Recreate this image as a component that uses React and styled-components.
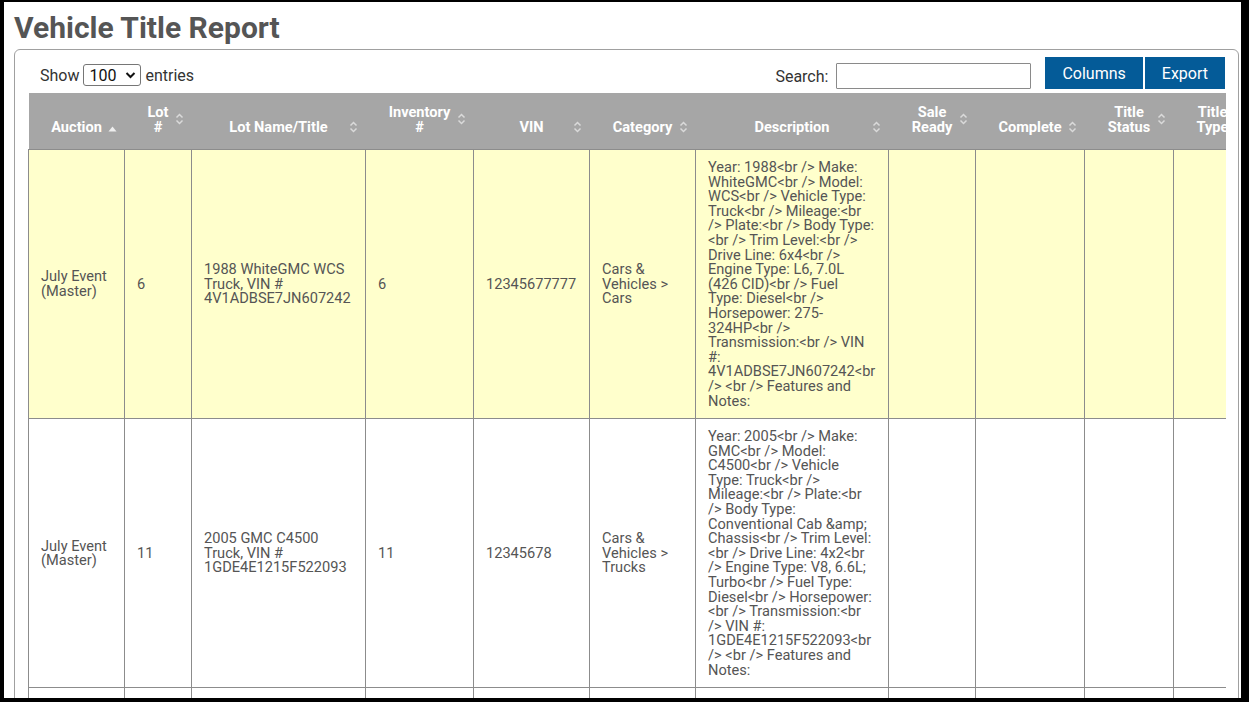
import React from "react";
import styled, { createGlobalStyle } from "styled-components";

const GlobalStyle = createGlobalStyle`
  html, body {
    margin: 0;
    padding: 0;
    background: #000;
    font-family: Roboto, "Liberation Sans", Arial, sans-serif;
  }
`;

const columns = [
  { key: "auction", label: ["Auction"], width: 96, sorted: true },
  { key: "lot", label: ["Lot", "#"], width: 67 },
  { key: "title", label: ["Lot Name/Title"], width: 174 },
  { key: "inventory", label: ["Inventory", "#"], width: 108 },
  { key: "vin", label: ["VIN"], width: 116 },
  { key: "category", label: ["Category"], width: 106 },
  { key: "description", label: ["Description"], width: 193 },
  { key: "saleReady", label: ["Sale", "Ready"], width: 87 },
  { key: "complete", label: ["Complete"], width: 109 },
  { key: "titleStatus", label: ["Title", "Status"], width: 89 },
  { key: "titleType", label: ["Title", "Type"], width: 78 },
  { key: "received", label: ["Received"], width: 100 },
];

const rows = [
  {
    auction: "July Event (Master)",
    lot: "6",
    title: "1988 WhiteGMC WCS Truck, VIN # 4V1ADBSE7JN607242",
    inventory: "6",
    vin: "12345677777",
    category: "Cars & Vehicles > Cars",
    description:
      "Year: 1988<br /> Make: WhiteGMC<br /> Model: WCS<br /> Vehicle Type: Truck<br /> Mileage:<br /> Plate:<br /> Body Type: <br /> Trim Level:<br /> Drive Line: 6x4<br /> Engine Type: L6, 7.0L (426 CID)<br /> Fuel Type: Diesel<br /> Horsepower: 275-324HP<br /> Transmission:<br /> VIN #: 4V1ADBSE7JN607242<br /> <br /> Features and Notes:",
    highlight: true,
  },
  {
    auction: "July Event (Master)",
    lot: "11",
    title: "2005 GMC C4500 Truck, VIN # 1GDE4E1215F522093",
    inventory: "11",
    vin: "12345678",
    category: "Cars & Vehicles > Trucks",
    description:
      "Year: 2005<br /> Make: GMC<br /> Model: C4500<br /> Vehicle Type: Truck<br /> Mileage:<br /> Plate:<br /> Body Type: Conventional Cab &amp; Chassis<br /> Trim Level: <br /> Drive Line: 4x2<br /> Engine Type: V8, 6.6L; Turbo<br /> Fuel Type: Diesel<br /> Horsepower: <br /> Transmission:<br /> VIN #: 1GDE4E1215F522093<br /> <br /> Features and Notes:",
  },
  {
    auction: "July Event (Master)",
    lot: "14",
    title: "2010 Ford F-350 Truck, VIN # 1FTWW3BR8AEA21774",
    inventory: "14",
    vin: "12345690",
    category: "Cars & Vehicles > Trucks",
    description: "Year: 2010<br /> Make: Ford<br /> Model: F-350",
  },
];

const SortIcon = ({ active }) =>
  active ? (
    <svg width="9" height="6" viewBox="0 0 9 6">
      <path d="M0.5 5.5 L4.5 0.5 L8.5 5.5 Z" fill="#eeeeee" />
    </svg>
  ) : (
    <svg width="9" height="14" viewBox="0 0 9 14">
      <path d="M1.5 5.5 L4.5 2.5 L7.5 5.5" fill="none" stroke="#dadada" strokeWidth="1.5" />
      <path d="M1.5 8.5 L4.5 11.5 L7.5 8.5" fill="none" stroke="#dadada" strokeWidth="1.5" />
    </svg>
  );

const ChevronDown = () => (
  <svg width="11" height="8" viewBox="0 0 11 8">
    <path d="M1.5 2 L5.5 6 L9.5 2" fill="none" stroke="#111" strokeWidth="2" />
  </svg>
);

export default function App() {
  return (
    <>
      <GlobalStyle />
      <Page>
        <Title>Vehicle Title Report</Title>
        <Panel>
          <Toolbar>
            <LengthControl>
              Show
              <SelectWrap>
                <Select defaultValue="100">
                  <option value="10">10</option>
                  <option value="25">25</option>
                  <option value="50">50</option>
                  <option value="100">100</option>
                </Select>
                <SelectArrow>
                  <ChevronDown />
                </SelectArrow>
              </SelectWrap>
              entries
            </LengthControl>
            <RightControls>
              <SearchLabel>
                Search:
                <SearchInput type="text" />
              </SearchLabel>
              <ButtonGroup>
                <ActionButton>Columns</ActionButton>
                <ActionButton>Export</ActionButton>
              </ButtonGroup>
            </RightControls>
          </Toolbar>

          <TableScroll>
            <Table>
              <colgroup>
                {columns.map((c) => (
                  <col key={c.key} style={{ width: c.width }} />
                ))}
              </colgroup>
              <thead>
                <tr>
                  {columns.map((c) => (
                    <HeadCell key={c.key}>
                      {c.label.map((line, i) => (
                        <HeadLine key={i}>{line}</HeadLine>
                      ))}
                      <SortMark $active={c.sorted} $twoLine={c.label.length > 1}>
                        <SortIcon active={c.sorted} />
                      </SortMark>
                    </HeadCell>
                  ))}
                </tr>
              </thead>
              <tbody>
                {rows.map((r, i) => (
                  <Row key={i} $highlight={r.highlight}>
                    {columns.map((c) => (
                      <Cell key={c.key}>{r[c.key] || ""}</Cell>
                    ))}
                  </Row>
                ))}
              </tbody>
            </Table>
          </TableScroll>
        </Panel>
      </Page>
    </>
  );
}

const Page = styled.div`
  margin: 2px 8px 4px 4px;
  height: 696px;
  overflow: hidden;
  background: #fff;
  padding: 0 2px 0 10px;
  box-sizing: border-box;
`;

const Title = styled.h1`
  margin: 0;
  padding: 8px 0 4px;
  font-size: 30px;
  line-height: 35px;
  font-weight: 700;
  color: #555;
`;

const Panel = styled.div`
  border: 1px solid #a0a0a0;
  border-radius: 6px;
  padding: 7px 12px 0 13px;
  height: 700px;
  box-sizing: border-box;
`;

const Toolbar = styled.div`
  display: flex;
  align-items: center;
  justify-content: space-between;
  height: 32px;
  margin-bottom: 4px;
`;

const LengthControl = styled.label`
  display: flex;
  align-items: center;
  gap: 4px;
  padding-left: 12px;
  padding-top: 4px;
  font-size: 16px;
  color: #333;
`;

const SelectWrap = styled.span`
  position: relative;
  display: inline-flex;
`;

const Select = styled.select`
  appearance: none;
  width: 58px;
  height: 22px;
  padding: 0 0 0 5px;
  border: 1px solid #767676;
  border-radius: 3px;
  background: #fff;
  font-family: Roboto, "Liberation Sans", Arial, sans-serif;
  font-size: 16px;
  color: #111;
`;

const SelectArrow = styled.span`
  position: absolute;
  right: 5px;
  top: 7px;
  display: flex;
  pointer-events: none;
`;

const RightControls = styled.div`
  display: flex;
  align-items: center;
  gap: 14px;
`;

const SearchLabel = styled.label`
  display: flex;
  align-items: center;
  gap: 8px;
  padding-top: 6px;
  font-size: 16px;
  color: #333;
`;

const SearchInput = styled.input`
  width: 195px;
  height: 26px;
  box-sizing: border-box;
  border: 1px solid #8a8a8a;
  border-radius: 1px;
  padding: 2px 4px;
  font-size: 14px;
`;

const ButtonGroup = styled.div`
  display: flex;
  gap: 2px;
  margin-right: 1px;
`;

const ActionButton = styled.button`
  height: 32px;
  padding: 0 17px;
  border: none;
  background: #045b98;
  color: #fff;
  font-family: Roboto, "Liberation Sans", Arial, sans-serif;
  font-size: 16px;
  cursor: pointer;
`;

const TableScroll = styled.div`
  overflow: hidden;
`;

const Table = styled.table`
  width: 1183px;
  table-layout: fixed;
  border-collapse: collapse;
`;

const HeadCell = styled.th`
  position: relative;
  background: #a6a6a6;
  color: #fff;
  font-weight: 700;
  font-size: 14.6px;
  line-height: 15px;
  text-align: center;
  vertical-align: bottom;
  padding: 12px 10px 14px;
  height: 30px;
  white-space: nowrap;
`;

const HeadLine = styled.div``;

const SortMark = styled.span`
  position: absolute;
  right: 8px;
  bottom: ${(p) => (p.$active ? "17px" : p.$twoLine ? "23px" : "15px")};
  display: flex;
`;

const Row = styled.tr`
  background: ${(p) => (p.$highlight ? "#ffffcc" : "#fff")};
`;

const Cell = styled.td`
  border: 1px solid #8c8c8c;
  padding: 10px 14px 10px 12px;
  color: #555;
  font-size: 14.6px;
  line-height: 14.6px;
  vertical-align: middle;
`;
